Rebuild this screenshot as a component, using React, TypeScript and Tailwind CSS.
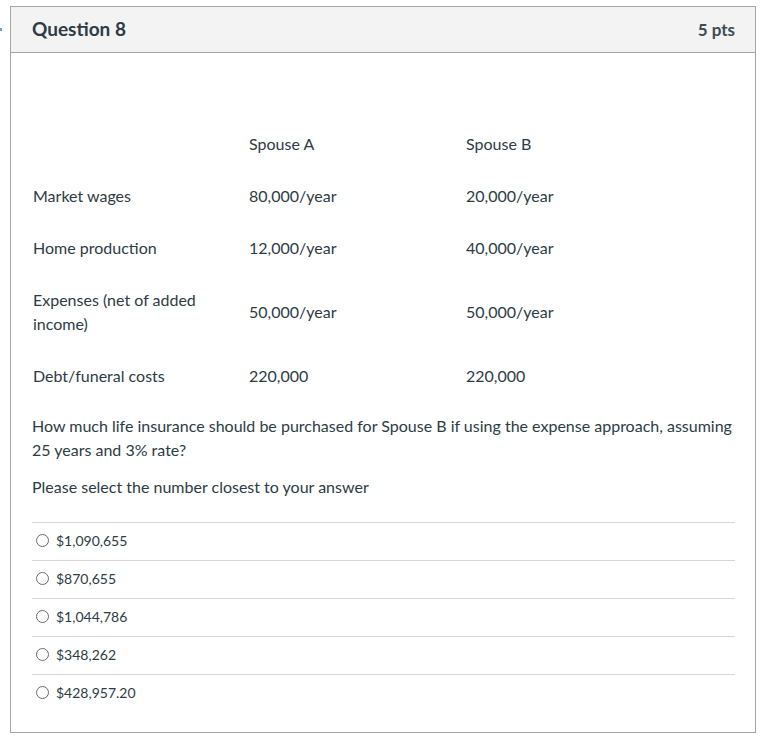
import React from "react";

const rows = [
  { label: "Market wages", a: "80,000/year", b: "20,000/year" },
  { label: "Home production", a: "12,000/year", b: "40,000/year" },
  { label: "Expenses (net of added income)", a: "50,000/year", b: "50,000/year" },
  { label: "Debt/funeral costs", a: "220,000", b: "220,000" },
];

const answers = ["$1,090,655", "$870,655", "$1,044,786", "$348,262", "$428,957.20"];

const App: React.FC = () => {
  return (
    <div
      className="relative min-h-[745px] bg-white pt-[6px] pl-[10px] pr-[10px] text-[#2d3b45]"
      style={{ fontFamily: "Lato, 'Liberation Sans', sans-serif" }}
    >
      <div className="absolute left-0 top-[28px] h-[3px] w-[2px] bg-[#7a9cc0]" />
      <div className="border border-[#a5a5a5] w-[746px] h-[727px]">
        <div className="flex justify-between items-center h-[46px] bg-[#f3f3f3] border-b border-[#a5a5a5] pl-[21px] pr-[20px]">
          <div className="text-[19px] font-bold">Question 8</div>
          <div className="text-[17px] font-bold text-[#3d4a54]">5 pts</div>
        </div>

        <div className="px-[21px] pt-[65px] text-[16px] leading-[24px]">
          <table className="border-collapse">
            <tbody>
              <tr className="h-[52px]">
                <td className="w-[217px] pl-[1px]"></td>
                <td className="w-[217px] align-middle">Spouse A</td>
                <td className="align-middle">Spouse B</td>
              </tr>
              {rows.map((r) => (
                <tr key={r.label} className={r.label.startsWith("Expenses") ? "h-[76px]" : "h-[52px]"}>
                  <td className="w-[217px] pl-[1px] pr-[40px] align-middle">{r.label}</td>
                  <td className="w-[217px] align-middle">{r.a}</td>
                  <td className="align-middle">{r.b}</td>
                </tr>
              ))}
            </tbody>
          </table>

          <p className="mt-[12px]">
            How much life insurance should be purchased for Spouse B if using the expense approach, assuming 25 years and 3%
            rate?
          </p>
          <p className="mt-[13px]">Please select the number closest to your answer</p>

          <div className="mt-[23px] w-[703px]">
            {answers.map((a) => (
              <label key={a} className="flex items-center h-[38px] border-t border-[#d7d7d7] pl-[4px] pb-[2px] text-[14px]">
                <span className="w-[13px] h-[13px] rounded-full border border-[#6b6b6b] bg-white mr-[7px] shrink-0" />
                <span>{a}</span>
              </label>
            ))}
          </div>
        </div>
      </div>
    </div>
  );
};

export default App;
